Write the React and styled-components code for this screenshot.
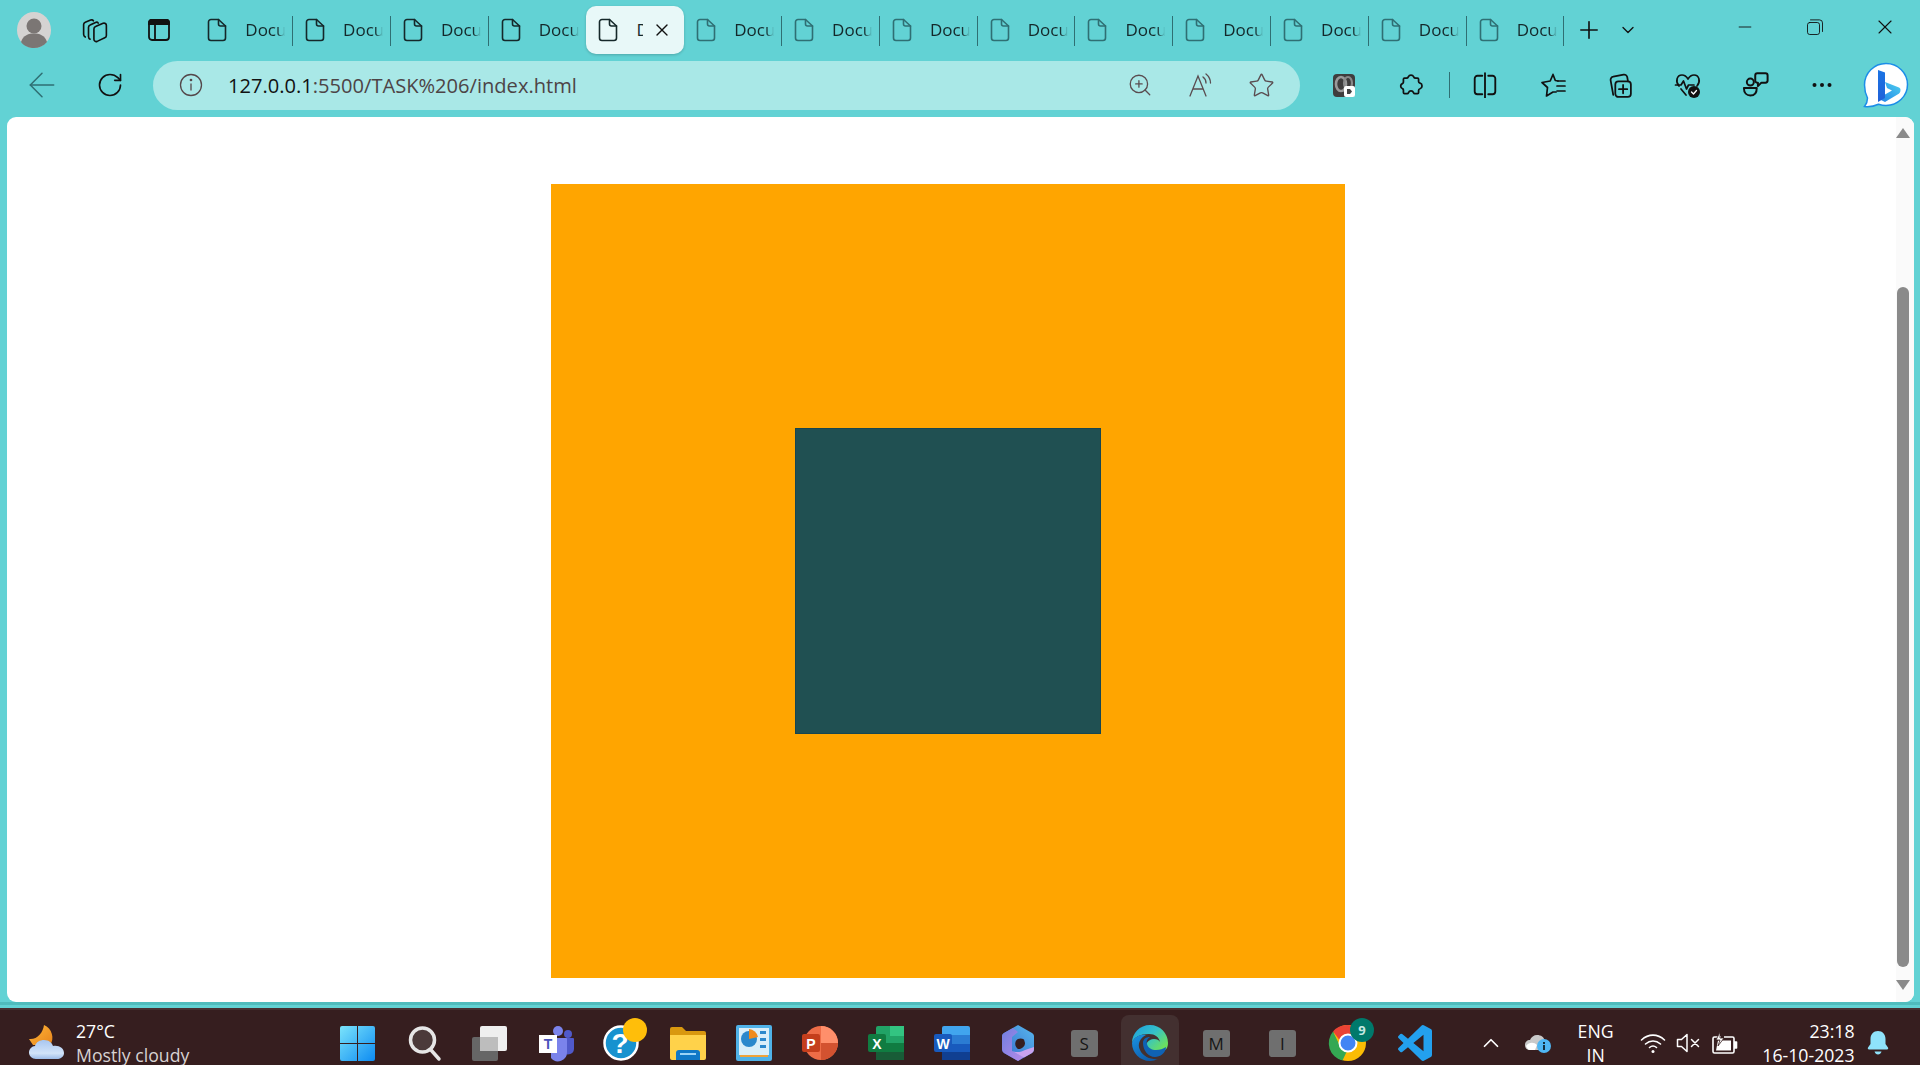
import * as React from "react";
import styled, { createGlobalStyle } from "styled-components";
import {
  ArrowLeft,
  ChevronDown,
  ChevronUp,
  Minus,
  Plus,
  RotateCw,
  Star,
  X,
  ZoomIn,
} from "lucide-react";

const GlobalStyle = createGlobalStyle`
  html, body {
    margin: 0;
    height: 100%;
    overflow: hidden;
    background: #62d2d4;
    font-family: "Open Sans", "Noto Sans", sans-serif;
  }
`;

const Window = styled.div`
  display: flex;
  flex-direction: column;
  width: 1920px;
  height: 1065px;
  overflow: hidden;
  background: #62d2d4;
`;

const TabStrip = styled.div`
  display: flex;
  align-items: center;
  height: 60px;
  flex: none;
`;

const Slot = styled.div`
  display: flex;
  align-items: center;
  justify-content: center;
  flex: none;
  width: ${(p) => p.$w}px;
  height: ${(p) => p.$h || 48}px;
  margin-left: ${(p) => p.$ml || 0}px;
  color: #111;
`;

const Tab = styled.div`
  display: flex;
  align-items: center;
  flex: none;
  box-sizing: border-box;
  width: 97.8px;
  height: 48px;
  padding-left: 12px;
  gap: 18px;
  border-radius: 10px;
  position: relative;
  background: ${(p) => (p.$active ? "#e8f8f8" : "transparent")};
  box-shadow: ${(p) => (p.$active ? "0 1px 3px rgba(0,0,0,.2)" : "none")};
  color: ${(p) => (p.$dim ? "#2f6f73" : "#15282a")};

  &::after {
    content: "";
    display: ${(p) => (p.$sep ? "block" : "none")};
    position: absolute;
    right: 0;
    top: 10px;
    height: 30px;
    width: 1px;
    background: #2f6f73;
  }
`;

const TabLabel = styled.span`
  display: block;
  width: ${(p) => (p.$active ? 7 : 40)}px;
  overflow: hidden;
  white-space: nowrap;
  font-size: 17px;
  line-height: 24px;
  color: #14282a;
  -webkit-mask-image: ${(p) =>
    p.$active ? "none" : "linear-gradient(90deg, #000 80%, transparent 100%)"};
  mask-image: ${(p) =>
    p.$active ? "none" : "linear-gradient(90deg, #000 80%, transparent 100%)"};
`;

const TabClose = styled.span`
  display: flex;
  margin-left: -9px;
  color: #111;
`;

const WindowControls = styled.div`
  display: flex;
  align-items: center;
  margin-left: auto;
  height: 54px;
  margin-top: -6px;
`;

const Toolbar = styled.div`
  display: flex;
  align-items: center;
  height: 57px;
  flex: none;
  box-sizing: border-box;
  padding-bottom: 7px;
`;

const AddressBar = styled.div`
  display: flex;
  align-items: center;
  flex: none;
  width: 1147px;
  height: 49px;
  border-radius: 25px;
  background: #a9e8e7;
`;

const Url = styled.div`
  flex: 1;
  font-size: 20.1px;
  color: #4d4446;
  white-space: nowrap;
`;

const UrlHost = styled.span`
  color: #121212;
`;

const ToolbarDivider = styled.div`
  flex: none;
  width: 1px;
  height: 26px;
  background: #2f6f73;
`;

const PageFrame = styled.div`
  flex: none;
  display: flex;
  height: 885px;
  margin: 0 6px 0 7px;
  background: #fff;
  border-radius: 9px;
  overflow: hidden;
`;

const Page = styled.div`
  flex: 1;
  box-sizing: border-box;
  padding: 67px 0 0 544px;
`;

const OuterSquare = styled.div`
  display: flex;
  align-items: center;
  justify-content: center;
  width: 794px;
  height: 794px;
  background: #ffa500;
`;

const InnerSquare = styled.div`
  box-sizing: border-box;
  width: 306px;
  height: 306px;
  background: #205052;
  border: 1px solid #17454f;
`;

const Scrollbar = styled.div`
  flex: none;
  box-sizing: border-box;
  width: 18px;
  padding: 11px 4px 0 0;
  background: #fafafa;
  display: flex;
  flex-direction: column;
  align-items: center;
`;

const ScrollArrow = styled.div`
  width: 0;
  height: 0;
  border-left: 7px solid transparent;
  border-right: 7px solid transparent;
  border-${(p) => (p.$down ? "top" : "bottom")}: 10px solid #8a8a8a;
`;

const ScrollThumb = styled.div`
  width: 12px;
  height: 680px;
  margin: 149px 0 13px;
  border-radius: 6px;
  background: #8a8a8a;
`;

const FrameEdge = styled.div`
  flex: none;
  height: 6px;
  background: linear-gradient(#4fbcbd 0, #4fbcbd 50%, #62d2d4 50%, #62d2d4 100%);
`;

const Taskbar = styled.div`
  flex: none;
  display: flex;
  box-sizing: border-box;
  height: 57px;
  padding-top: 9px;
  overflow: hidden;
  background: #361e1f;
  border-top: 2px solid #473031;
  color: #fff;
`;

const Weather = styled.div`
  display: flex;
  flex: none;
  width: 324px;
  box-sizing: border-box;
  padding-left: 29px;
  gap: 12px;
`;

const WeatherIcon = styled.div`
  display: flex;
  align-items: center;
  justify-content: center;
  width: 35px;
  height: 46px;
`;

const Lines = styled.div`
  font-size: 17.7px;
  line-height: 24px;
  text-align: ${(p) => p.$align || "left"};
  width: ${(p) => (p.$w ? `${p.$w}px` : "auto")};
  flex: none;
  color: #fff;
  white-space: nowrap;
`;

const Muted = styled.div`
  color: #d8d2d2;
`;

const Apps = styled.div`
  display: flex;
  flex: none;
`;

const AppSlot = styled.div`
  display: flex;
  align-items: center;
  justify-content: center;
  flex: none;
  position: relative;
  width: 66.1px;
  height: 48px;
`;

const ActiveHighlight = styled.div`
  position: absolute;
  left: 4px;
  right: 4px;
  top: -4px;
  height: 60px;
  border-radius: 8px;
  background: #433030;
`;

const AppIcon = styled.div`
  display: flex;
  position: relative;
  z-index: 1;

  svg {
    overflow: visible;
  }
`;

const Tray = styled.div`
  display: flex;
  flex: none;
  margin-left: 20px;
`;

const TraySlot = styled.div`
  display: flex;
  align-items: center;
  justify-content: center;
  flex: none;
  width: ${(p) => p.$w}px;
  height: 48px;
  color: #fff;
`;

const LetterTile = styled.div`
  display: flex;
  align-items: center;
  justify-content: center;
  width: 27px;
  height: 27px;
  border-radius: 3px;
  background: #6f6f6f;
  color: #161616;
  font-size: 17px;
`;

const Svg = ({ s = 24, h, vb = "0 0 24 24", sw = 1.5, children }) => (
  <svg
    width={s}
    height={h || s}
    viewBox={vb}
    fill="none"
    stroke="currentColor"
    strokeWidth={sw}
    strokeLinecap="round"
    strokeLinejoin="round"
  >
    {children}
  </svg>
);

const FileIcon = () => (
  <Svg s={20} h={24} vb="0 0 20 24" sw={1.6}>
    <path d="M4 1.5h7.5L18.5 8v12a2.5 2.5 0 0 1-2.5 2.5H4A2.5 2.5 0 0 1 1.5 20V4A2.5 2.5 0 0 1 4 1.5z" />
    <path d="M11.5 1.5V6a2 2 0 0 0 2 2h5" />
  </Svg>
);

const Avatar = () => (
  <svg width="34" height="36" viewBox="0 0 34 36">
    <ellipse cx="17" cy="18" rx="17" ry="18" fill="#d5d3d2" />
    <circle cx="17" cy="14" r="7.5" fill="#7b7674" />
    <path d="M4 30c2-7 8-8.5 13-8.5S28 23 30 30c-3.5 4-8 6-13 6S7 34 4 30z" fill="#7b7674" />
  </svg>
);

const Workspaces = () => (
  <Svg s={26}>
    <path d="M3 18.5C1.800 17.800 1.500 17 1.500 16V7c0-1 .5-1.800 1.500-2.200l5-2c1-.4 2-.1 2.500.7" />
    <path d="M7.500 20.500c-1.200-.6-1.500-1.500-1.500-2.500V9.500c0-1 .5-1.800 1.500-2.200l5-2.300c1-.4 2-.1 2.500.7" />
    <path d="M11 11c0-1 .5-1.800 1.500-2.200l7-3c1.500-.6 3 .4 3 2V17c0 1-.5 1.800-1.500 2.200l-7 3.300c-1.500.6-3-.4-3-2z" />
  </Svg>
);

const VerticalTabs = () => (
  <svg width="22" height="22" viewBox="0 0 22 22" fill="none" stroke="#111" strokeWidth="1.8">
    <rect x="1" y="1" width="20" height="20" rx="3" />
    <path d="M1 5h20V3a2 2 0 0 0-2-2H3a2 2 0 0 0-2 2z" fill="#111" />
    <path d="M7 5v16" />
  </svg>
);

const InfoIcon = () => (
  <svg width="24" height="24" viewBox="0 0 24 24" fill="none" stroke="#54474a" strokeWidth="1.3">
    <circle cx="12" cy="12" r="10.5" />
    <path d="M12 10.5v7" />
    <circle cx="12" cy="7" r=".7" fill="#54474a" />
  </svg>
);

const ReadAloud = () => (
  <svg width="26" height="26" viewBox="0 0 26 26" fill="none" stroke="#5a4c50" strokeWidth="1.3" strokeLinecap="round">
    <path d="M2 24L10 4l8 20M5 17h10" />
    <path d="M15 5c2 1.5 3 3.5 3 6M18 2c3 2.5 4.500 5 4.500 9" />
  </svg>
);

const AppBadge = () => (
  <svg width="22" height="23" viewBox="0 0 22 23">
    <rect width="22" height="23" rx="4" fill="#3f3d3d" />
    <ellipse cx="8" cy="10" rx="5" ry="7" fill="none" stroke="#9a9a9a" strokeWidth="2.600" />
    <ellipse cx="15" cy="9" rx="4" ry="6" fill="none" stroke="#8a8a8a" strokeWidth="2.200" />
    <rect x="11" y="12" width="11" height="11" rx="2" fill="#fff" />
    <path d="M14 15h3l2 2.500-2 2.500h-3z" fill="#444" />
  </svg>
);

const Extensions = () => (
  <Svg s={26} sw={1.6}>
    <path d="M9.5 4.500a2.800 2.800 0 0 1 5 0c.3.800 1 1.200 1.800 1.200H18a1 1 0 0 1 1 1v2c0 .8.6 1.300 1.300 1.500a2.800 2.800 0 0 1 0 5.300c-.7.2-1.300.7-1.300 1.500v2a1 1 0 0 1-1 1h-2.500c-.7 0-1-.5-1.200-1a2.500 2.500 0 0 0-4.600 0c-.2.5-.5 1-1.200 1H6a1 1 0 0 1-1-1v-2.500c0-.7-.5-1-1-1.200a2.500 2.500 0 0 1 0-4.600c.5-.2 1-.5 1-1.200V6.700a1 1 0 0 1 1-1h1.700c.8 0 1.500-.4 1.800-1.200z" />
  </Svg>
);

const SplitScreen = () => (
  <Svg s={26} sw={1.7}>
    <path d="M9.500 3.500H5A2.500 2.500 0 0 0 2.500 6v12A2.500 2.500 0 0 0 5 20.500h4.500" />
    <path d="M15 3.500h4A2.500 2.500 0 0 1 21.500 6v12a2.500 2.500 0 0 1-2.500 2.500h-4" />
    <path d="M12 1v23" />
  </Svg>
);

const Favorites = () => (
  <Svg s={26} vb="0 0 26 26" sw={1.7}>
    <path d="M13 2.500l2.300 6 2.700.5M13 2.500L10.200 9 2 10.500l5.500 5-1 8.500 6.500-4 3 0" />
    <path d="M18 9h7M17 14h8M17 19h8" />
  </Svg>
);

const Collections = () => (
  <Svg s={27} vb="0 0 26 26" sw={1.7}>
    <path d="M6 22L3.500 8A3 3 0 0 1 6 4.500L16 2.500a3 3 0 0 1 3.500 2.500l.7 4" />
    <rect x="8" y="9" width="15" height="15" rx="3" />
    <path d="M15.500 12.500v8M11.500 16.500h8" />
  </Svg>
);

const Health = () => (
  <svg width="28" height="28" viewBox="0 0 28 28" fill="none" stroke="#111" strokeWidth="1.7" strokeLinecap="round" strokeLinejoin="round">
    <path d="M5 15C1 10 3 4 8 4c3 0 4.500 1.500 6 4 1.500-2.500 3-4 6-4 5 0 7 6 3 11" />
    <path d="M1.500 14H7l2.500-4 3 8 2-4H20" />
    <path d="M7 18l5 6" />
    <circle cx="20" cy="21" r="6" fill="#111" stroke="none" />
    <path d="M17.500 21l2 2 3-3.500" stroke="#fff" strokeWidth="1.300" />
  </svg>
);

const People = () => (
  <Svg s={28} sw={1.7}>
    <circle cx="8" cy="9.500" r="3" />
    <path d="M2.500 14.500h11c0 4.500-2.500 6.500-5.500 6.500s-5.500-2-5.500-6.500z" />
    <path d="M14 2h7a1.800 1.800 0 0 1 1.800 1.800v4.400A1.800 1.800 0 0 1 21 10h-3.500L14.500 13v-3A1.800 1.800 0 0 1 12.200 8.200V3.800A1.800 1.800 0 0 1 14 2z" />
  </Svg>
);

const Dots = () => (
  <svg width="20" height="6" viewBox="0 0 20 6" fill="#111">
    <circle cx="2.500" cy="3" r="2" />
    <circle cx="10" cy="3" r="2" />
    <circle cx="17.500" cy="3" r="2" />
  </svg>
);

const Bing = () => (
  <svg width="46" height="46" viewBox="0 0 46 46">
    <defs>
      <linearGradient id="bingStem" x1="0" y1="0" x2="0" y2="1">
        <stop offset="0" stopColor="#1b74e4" />
        <stop offset="1" stopColor="#2060d8" />
      </linearGradient>
      <linearGradient id="bingBowl" x1="0" y1="1" x2="1" y2="0">
        <stop offset="0" stopColor="#1e7fe8" />
        <stop offset="1" stopColor="#4fd0ee" />
      </linearGradient>
    </defs>
    <path
      d="M23 1.500c12 0 21.500 9.500 21.500 21S35 43.500 23 43.500c-2.500 0-5-.5-7.500-1.300C12 43.800 6 45 1.500 44.500c2-2.500 3-5 3-8.500C2.500 32 1.500 28 1.500 23 1.500 11 11 1.500 23 1.500z"
      fill="#fff"
      stroke="#1c8ee8"
      strokeWidth="1.500"
    />
    <path d="M22 20l14 5.500c1 .5 1.500 1.500 1.500 2.500 0 2-1 3.500-3 4.500L22 40l-7-3.500 14-8-5-2.500z" fill="url(#bingBowl)" />
    <path d="M15 8l7 2.500V36l-7 4z" fill="url(#bingStem)" />
  </svg>
);

const RestoreIcon = () => (
  <Svg s={18} sw={1.2}>
    <rect x="2" y="6" width="16" height="16" rx="3" />
    <path d="M6 2.500h12A4 4 0 0 1 22 6.500V18" />
  </Svg>
);

const WeatherGlyph = () => (
  <svg width="35" height="34" viewBox="0 0 35 34">
    <defs>
      <linearGradient id="moon" x1="0" y1="0" x2="1" y2="1">
        <stop offset="0" stopColor="#ffb638" />
        <stop offset="1" stopColor="#e8851c" />
      </linearGradient>
      <linearGradient id="cloud" x1="0" y1="0" x2="0" y2="1">
        <stop offset="0" stopColor="#a8c6f0" />
        <stop offset=".7" stopColor="#d2e3f8" />
        <stop offset="1" stopColor="#9dbce8" />
      </linearGradient>
    </defs>
    <path d="M15 0c8 3 11 14 6 20H4L0 14c8 1 14-6 15-14z" fill="url(#moon)" />
    <path d="M7 34c-4 0-7-3-7-6.500S3 21 6 21c1-4 5-6 9-6 5 0 8 3 9 6 6-1 11 2 11 7 0 4-4 6-7 6z" fill="url(#cloud)" />
  </svg>
);

const WinLogo = () => (
  <svg width="35" height="35" viewBox="0 0 35 35">
    <defs>
      <linearGradient id="win" x1="0" y1="0" x2="1" y2="1">
        <stop offset="0" stopColor="#7be4fb" />
        <stop offset="1" stopColor="#0d8bf2" />
      </linearGradient>
    </defs>
    <path d="M0 2a2 2 0 0 1 2-2h15v17H0zM18 0h15a2 2 0 0 1 2 2v15H18zM0 18h17v17H2a2 2 0 0 1-2-2zM18 18h17v15a2 2 0 0 1-2 2H18z" fill="url(#win)" />
  </svg>
);

const SearchGlyph = () => (
  <svg width="38" height="36" viewBox="-4 0 38 36" fill="#4b3a3a" stroke="#e6e6e6" strokeWidth="3.500" strokeLinecap="round">
    <circle cx="14.500" cy="15" r="12" />
    <path d="M23 25l8 9" />
  </svg>
);

const TaskView = () => (
  <svg width="36" height="36" viewBox="0 0 36 36">
    <rect x="1" y="12" width="26" height="24" rx="2" fill="#666" />
    <rect x="9" y="1" width="27" height="25" rx="2" fill="#efefef" />
    <rect x="9" y="12" width="18" height="14" fill="#bdbdbd" />
  </svg>
);

const Teams = () => (
  <svg width="40" height="36" viewBox="-4 0 40 36">
    <circle cx="19" cy="6" r="5" fill="#7b83eb" />
    <circle cx="29" cy="9" r="4" fill="#5059c9" />
    <path d="M25 13h9a1 1 0 0 1 1 1v10a6 6 0 0 1-10 4z" fill="#5059c9" />
    <path d="M12 13h15a1 1 0 0 1 1 1v13a9 9 0 0 1-16 6z" fill="#7b83eb" />
    <rect x="0" y="10" width="18" height="18" fill="#fff" />
    <text x="9" y="24" fontFamily="'Liberation Sans', sans-serif" fontWeight="700" fontSize="14" fill="#4b53bc" textAnchor="middle">T</text>
  </svg>
);

const Help = () => (
  <svg width="36" height="36" viewBox="0 0 36 36">
    <circle cx="18" cy="18" r="16.500" fill="#1792cf" stroke="#fff" strokeWidth="2.500" />
    <text x="17" y="28" fontFamily="'Liberation Sans', sans-serif" fontWeight="700" fontSize="28" fill="#fff" textAnchor="middle">?</text>
    <circle cx="32" cy="5" r="12" fill="#ffbe0a" />
  </svg>
);

const Folder = () => (
  <svg width="36" height="34" viewBox="0 0 36 34">
    <path d="M0 3a2 2 0 0 1 2-2h10l4 4h18a2 2 0 0 1 2 2v4H0z" fill="#d9980f" />
    <path d="M0 9h36v23a2 2 0 0 1-2 2H2a2 2 0 0 1-2-2z" fill="#ffd24a" />
    <path d="M6 34V27a3 3 0 0 1 3-3h18a3 3 0 0 1 3 3v7z" fill="#0f78c7" />
    <rect x="10" y="27" width="16" height="2" fill="#9ad3f7" />
  </svg>
);

const ControlPanel = () => (
  <svg width="36" height="36" viewBox="0 0 36 36">
    <rect width="36" height="36" rx="2" fill="#4fb2e8" />
    <rect x="3" y="3" width="30" height="27" fill="#d9eef9" />
    <circle cx="13" cy="14" r="8" fill="#2b88cc" />
    <path d="M13 14V4a10 10 0 0 1 9 8z" fill="#f08a1d" />
    <rect x="24" y="6" width="6" height="3" fill="#2b88cc" />
    <rect x="24" y="13" width="6" height="3" fill="#2b88cc" />
    <rect x="24" y="20" width="6" height="3" fill="#2b88cc" />
    <rect x="4" y="30" width="28" height="2" fill="#f0a33a" />
  </svg>
);

const OfficeTile = ({ letter, color }) => (
  <>
    <rect x="0" y="9" width="18" height="18" rx="2" fill={color} />
    <text x="9" y="23.500" fontFamily="'Liberation Sans', sans-serif" fontWeight="700" fontSize="14" fill="#fff" textAnchor="middle">{letter}</text>
  </>
);

const PowerPoint = () => (
  <svg width="36" height="36" viewBox="0 0 36 36">
    <circle cx="19" cy="18" r="17" fill="#ed6c47" />
    <path d="M19 1a17 17 0 0 1 17 17H19z" fill="#ff8f6b" />
    <path d="M19 18h17a17 17 0 0 1-17 17z" fill="#d35230" />
    <OfficeTile letter="P" color="#c43e1c" />
  </svg>
);

const Excel = () => (
  <svg width="36" height="36" viewBox="0 0 36 36">
    <rect x="8" y="1" width="28" height="34" rx="2" fill="#21a366" />
    <rect x="22" y="1" width="14" height="10" fill="#33c481" />
    <rect x="8" y="18" width="28" height="9" fill="#107c41" />
    <rect x="8" y="27" width="28" height="8" fill="#185c37" />
    <OfficeTile letter="X" color="#107c41" />
  </svg>
);

const Word = () => (
  <svg width="36" height="36" viewBox="0 0 36 36">
    <rect x="8" y="1" width="28" height="34" rx="2" fill="#41a5ee" />
    <rect x="8" y="10" width="28" height="9" fill="#2b7cd3" />
    <rect x="8" y="19" width="28" height="8" fill="#185abd" />
    <rect x="8" y="27" width="28" height="8" fill="#103f91" />
    <OfficeTile letter="W" color="#185abd" />
  </svg>
);

const Copilot = () => (
  <svg width="32" height="36" viewBox="0 0 32 36">
    <defs>
      <linearGradient id="cpA" x1="1" y1="0" x2="0" y2="1">
        <stop offset="0" stopColor="#58b8ee" />
        <stop offset="1" stopColor="#3468c8" />
      </linearGradient>
      <linearGradient id="cpB" x1="0" y1="0" x2="1" y2="1">
        <stop offset="0" stopColor="#6f7fe0" />
        <stop offset="1" stopColor="#b78ae8" />
      </linearGradient>
    </defs>
    <path d="M16 0l14 8c2 1 2 3 2 4v12c0 2-1 3-2 4l-14 8-14-8c-1-1-2-2-2-4V12c0-1 0-3 2-4z" fill="url(#cpA)" />
    <path d="M2 8l9-5 5 4-6 5v14l12 6-6 4-14-8c-1-1-2-2-2-4V12c0-1 0-3 2-4z" fill="url(#cpB)" />
    <path d="M32 22v2c0 2-1 3-2 4l-8 4.500-12-6.500c4 2 10 1 13-1z" fill="#c9a2ee" />
    <path d="M22 14.500c-3-2-7.500-1-8.500 2.500s1 7 3.500 7 6-2.500 6-6z" fill="#361e1f" />
  </svg>
);

const Edge = () => (
  <svg width="36" height="36" viewBox="0 0 36 36">
    <defs>
      <linearGradient id="edA" x1="0" y1="0" x2="1" y2=".7">
        <stop offset="0" stopColor="#1b9de2" />
        <stop offset=".55" stopColor="#35c1c8" />
        <stop offset="1" stopColor="#6be05f" />
      </linearGradient>
      <linearGradient id="edB" x1="0" y1="0" x2=".6" y2="1">
        <stop offset="0" stopColor="#1a94e4" />
        <stop offset="1" stopColor="#0d5cab" />
      </linearGradient>
    </defs>
    <path d="M18 0c10 0 18 8 18 18 0 3-1 6-3 7H14c-1-6 2-11 8-11 3 0 5 1 6 3-1-5-5-8-11-8C8 9 2 12 0 18 0 8 8 0 18 0z" fill="url(#edA)" />
    <path d="M0 18c2-6 8-9 14-8-6 3-9 9-6 15 3 7 12 10 18 9-3 1-5 2-8 2C8 36 0 28 0 18z" fill="url(#edB)" />
    <path d="M11 18c0-4 3-6 7-6-3 2-4 4-3 7 1 4 5 6 9 6 4 0 7-1 10-3 0 6-6 10-11 10-7 0-12-7-12-14z" fill="#0f62b4" />
  </svg>
);

const Chrome = () => (
  <svg width="36" height="36" viewBox="0 0 36 36">
    <circle cx="18" cy="18" r="18" fill="#fbbc04" />
    <path d="M18 0a18 18 0 0 1 15.600 9H18a9 9 0 0 0-8.500 6L3 6.500A18 18 0 0 1 18 0z" fill="#ea4335" />
    <path d="M3 6.500L10.500 22a9 9 0 0 0 6 5l-4 8.600A18 18 0 0 1 3 6.500z" fill="#34a853" />
    <circle cx="18" cy="18" r="8.500" fill="#4285f4" stroke="#fff" strokeWidth="2" />
    <circle cx="32" cy="5" r="12" fill="#00796b" />
    <text x="32" y="10" fontFamily="'Open Sans', sans-serif" fontWeight="700" fontSize="13" fill="#c7e8e2" textAnchor="middle">9</text>
  </svg>
);

const VsCode = () => (
  <svg width="34" height="36" viewBox="0 0 24 24" preserveAspectRatio="none">
    <path
      d="M23.150 2.587L18.210.21a1.494 1.494 0 0 0-1.705.29l-9.460 8.630-4.120-3.128a.999.999 0 0 0-1.276.057L.327 7.261A1 1 0 0 0 .326 8.740L3.899 12 .326 15.260a1 1 0 0 0 .001 1.479L1.650 17.940a.999.999 0 0 0 1.276.057l4.120-3.128 9.460 8.630a1.492 1.492 0 0 0 1.704.29l4.942-2.377A1.500 1.500 0 0 0 24 20.060V3.939a1.500 1.500 0 0 0-.85-1.352zm-5.146 14.861L10.826 12l7.178-5.448v10.896z"
      fill="#23a0ee"
    />
  </svg>
);

const CloudInfo = () => (
  <svg width="26" height="20" viewBox="0 0 26 20">
    <path d="M5 17c-3 0-5-2-5-5s2-5 5-5c1-3 4-5 7-5 4 0 7 2 8 6 3 0 5 2 5 5s-2 4-5 4z" fill="#c9c9c9" />
    <path d="M1 13c3-4 8-4 11-1l-2 5H5c-2 0-3-2-4-4z" fill="#fff" />
    <circle cx="19" cy="13" r="7" fill="#4fb6f3" />
    <rect x="18" y="12" width="2" height="5" fill="#14303f" />
    <rect x="18" y="9" width="2" height="2" fill="#14303f" />
  </svg>
);

const WifiGlyph = () => (
  <svg width="26" height="22" viewBox="0 0 26 22" fill="none" stroke="#fff" strokeWidth="1.600" strokeLinecap="round">
    <path d="M1.500 8c7-6.500 16-6.500 23 0" />
    <path d="M5.500 12c4.500-4 10.500-4 15 0" />
    <path d="M9.500 15.500c2-1.700 5-1.700 7 0" />
    <circle cx="13" cy="19.500" r="1.500" fill="#fff" stroke="none" />
  </svg>
);

const MuteGlyph = () => (
  <svg width="24" height="22" viewBox="0 0 24 22" fill="none" stroke="#fff" strokeWidth="1.500" strokeLinejoin="round" strokeLinecap="round">
    <path d="M1.500 7.500h4L11 2.500v17l-5.500-5h-4z" />
    <path d="M15.500 7.500l7 7M22.500 7.500l-7 7" />
  </svg>
);

const BatteryGlyph = () => (
  <svg width="26" height="24" viewBox="0 0 26 24" fill="none" stroke="#fff" strokeWidth="1.600" strokeLinejoin="round">
    <path d="M9 6H2.500A1.500 1.500 0 0 0 1 7.500v13A1.500 1.500 0 0 0 2.500 22h18a1.500 1.500 0 0 0 1.500-1.500v-13A1.500 1.500 0 0 0 20.500 6H12" />
    <path d="M22 11h2.500v6H22" fill="#fff" />
    <path d="M4 19.500l2-10h13v10z" fill="#fff" stroke="none" />
    <path d="M8 1L4 9h4l-2 6 6-8H8z" fill="#fff" stroke="#361e1f" strokeWidth=".8" />
  </svg>
);

const BellGlyph = () => (
  <svg width="22" height="26" viewBox="0 0 22 26" fill="#8fe3fb">
    <path d="M11 1c-4.500 0-7.500 3.500-7.500 8v5L1 17.500c-.5 1 0 2 1 2h18c1 0 1.500-1 1-2L18.500 14V9C18.500 4.500 15.500 1 11 1z" />
    <path d="M7.500 21.500h7c-.5 2-2 3-3.500 3s-3-1-3.500-3z" />
  </svg>
);

const TAB_COUNT = 14;
const ACTIVE_TAB = 4;

const tabs = Array.from({ length: TAB_COUNT }, (_, i) => i);

const apps = [
  <WinLogo />,
  <SearchGlyph />,
  <TaskView />,
  <Teams />,
  <Help />,
  <Folder />,
  <ControlPanel />,
  <PowerPoint />,
  <Excel />,
  <Word />,
  <Copilot />,
  <LetterTile>S</LetterTile>,
  <Edge />,
  <LetterTile>M</LetterTile>,
  <LetterTile>I</LetterTile>,
  <Chrome />,
  <VsCode />,
];

export default function App() {
  return (
    <Window>
      <GlobalStyle />
      <TabStrip>
        <Slot $w={67}>
          <Avatar />
        </Slot>
        <Slot $w={56}>
          <Workspaces />
        </Slot>
        <Slot $w={72.3}>
          <VerticalTabs />
        </Slot>
        {tabs.map((i) =>
          i === ACTIVE_TAB ? (
            <Tab key={i} $active>
              <FileIcon />
              <TabLabel $active>Document</TabLabel>
              <TabClose>
                <X size={20} strokeWidth={1.6} />
              </TabClose>
            </Tab>
          ) : (
            <Tab key={i} $dim={i > ACTIVE_TAB} $sep={i !== ACTIVE_TAB - 1}>
              <FileIcon />
              <TabLabel>Document</TabLabel>
            </Tab>
          )
        )}
        <Slot $w={50}>
          <Plus size={28} strokeWidth={1.4} />
        </Slot>
        <Slot $w={28}>
          <ChevronDown size={20} strokeWidth={1.6} />
        </Slot>
        <WindowControls>
          <Slot $w={70} $h={54}>
            <Minus size={20} strokeWidth={1.1} />
          </Slot>
          <Slot $w={70} $h={54}>
            <RestoreIcon />
          </Slot>
          <Slot $w={70} $h={54}>
            <X size={24} strokeWidth={1.1} />
          </Slot>
        </WindowControls>
      </TabStrip>

      <Toolbar>
        <Slot $w={84}>
          <ArrowLeft size={40} strokeWidth={0.9} color="#2f6f73" />
        </Slot>
        <Slot $w={52}>
          <RotateCw size={28} strokeWidth={1.4} />
        </Slot>
        <Slot $w={17} />
        <AddressBar>
          <Slot $w={75}>
            <InfoIcon />
          </Slot>
          <Url>
            <UrlHost>127.0.0.1</UrlHost>:5500/TASK%206/index.html
          </Url>
          <Slot $w={61}>
            <ZoomIn size={26} strokeWidth={1.2} color="#5a4c50" />
          </Slot>
          <Slot $w={61}>
            <ReadAloud />
          </Slot>
          <Slot $w={61}>
            <Star size={27} strokeWidth={1.2} color="#5a4c50" />
          </Slot>
          <Slot $w={8} />
        </AddressBar>
        <Slot $w={88}>
          <AppBadge />
        </Slot>
        <Slot $w={46}>
          <Extensions />
        </Slot>
        <Slot $w={4} $ml={13}>
          <ToolbarDivider />
        </Slot>
        <Slot $w={68}>
          <SplitScreen />
        </Slot>
        <Slot $w={68}>
          <Favorites />
        </Slot>
        <Slot $w={67}>
          <Collections />
        </Slot>
        <Slot $w={67}>
          <Health />
        </Slot>
        <Slot $w={67}>
          <People />
        </Slot>
        <Slot $w={67}>
          <Dots />
        </Slot>
        <Slot $w={62}>
          <Bing />
        </Slot>
      </Toolbar>

      <PageFrame>
        <Page>
          <OuterSquare>
            <InnerSquare />
          </OuterSquare>
        </Page>
        <Scrollbar>
          <ScrollArrow />
          <ScrollThumb />
          <ScrollArrow $down />
        </Scrollbar>
      </PageFrame>
      <FrameEdge />

      <Taskbar>
        <Weather>
          <WeatherIcon>
            <WeatherGlyph />
          </WeatherIcon>
          <Lines>
            <div>27°C</div>
            <Muted>Mostly cloudy</Muted>
          </Lines>
        </Weather>
        <Apps>
          {apps.map((icon, i) => (
            <AppSlot key={i}>
              {i === 12 && <ActiveHighlight />}
              <AppIcon>{icon}</AppIcon>
            </AppSlot>
          ))}
        </Apps>
        <Tray>
          <TraySlot $w={46}>
            <ChevronUp size={26} strokeWidth={1.6} />
          </TraySlot>
          <TraySlot $w={48}>
            <CloudInfo />
          </TraySlot>
          <Lines $w={68} $align="center">
            <div>ENG</div>
            <div>IN</div>
          </Lines>
          <TraySlot $w={46}>
            <WifiGlyph />
          </TraySlot>
          <TraySlot $w={24}>
            <MuteGlyph />
          </TraySlot>
          <TraySlot $w={50}>
            <BatteryGlyph />
          </TraySlot>
          <Lines $w={105} $align="right">
            <div>23:18</div>
            <div>16-10-2023</div>
          </Lines>
          <TraySlot $w={47}>
            <BellGlyph />
          </TraySlot>
        </Tray>
      </Taskbar>
    </Window>
  );
}
